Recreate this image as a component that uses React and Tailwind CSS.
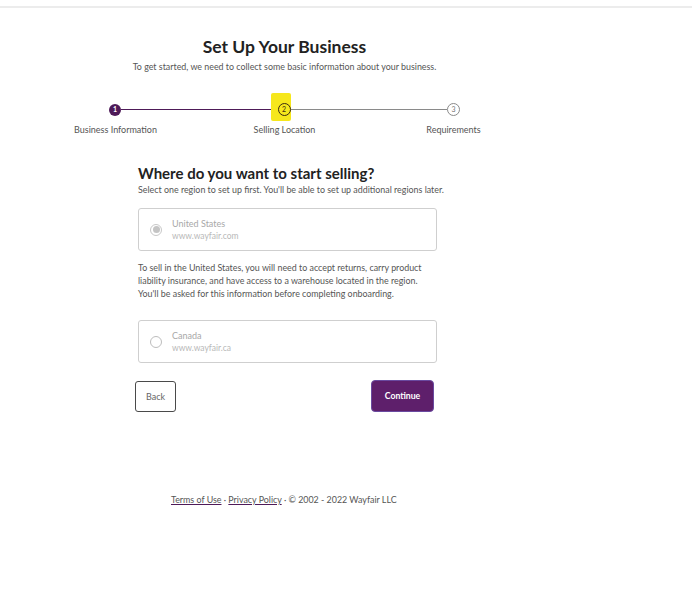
import React from 'react';

const steps = [
    { n: 1, label: 'Business Information', state: 'done' },
    { n: 2, label: 'Selling Location', state: 'current' },
    { n: 3, label: 'Requirements', state: 'todo' },
];

const StepDot = ({ step }) => {
    if (step.state === 'done') {
        return (
            <div className="w-[12px] h-[12px] rounded-full bg-[#4e1a58] text-white text-[7px] font-bold flex items-center justify-center">
                {step.n}
            </div>
        );
    }
    if (step.state === 'current') {
        return (
            <div className="relative w-[13px] h-[13px]">
                {/* highlighter mark */}
                <div className="absolute left-[-7px] top-[-10px] w-[20px] h-[28px] bg-[#f6e71c] rounded-[2px]"></div>
                <div className="relative w-[13px] h-[13px] rounded-full border-[1.5px] border-[#3a2a10] text-[#3a2a10] text-[7px] flex items-center justify-center">
                    {step.n}
                </div>
            </div>
        );
    }
    return (
        <div className="w-[13px] h-[13px] rounded-full border border-[#8a8a8a] bg-white text-[#777] text-[7px] flex items-center justify-center">
            {step.n}
        </div>
    );
};

const RegionCard = ({ name, url, selected }) => (
    <div className="h-[43px] border border-[#cfcfcf] rounded-[3px] flex items-center pl-[11px]">
        {selected ? (
            <div className="w-[12px] h-[12px] rounded-full border border-[#c8c8c8] flex items-center justify-center">
                <div className="w-[7px] h-[7px] rounded-full bg-[#c4c4c4]"></div>
            </div>
        ) : (
            <div className="w-[12px] h-[12px] rounded-full border border-[#bdbdbd]"></div>
        )}
        <div className="ml-[10px] flex flex-col leading-[13px]">
            <span className="text-[9px] text-[#a8a8a8]">{name}</span>
            <span className="text-[8.5px] text-[#b8b8b8]">{url}</span>
        </div>
    </div>
);

export default function App() {
    return (
        <div className="w-[695px] h-[593px] bg-white text-[#2b2b2b] overflow-hidden" style={{ fontFamily: 'Lato, "Open Sans", sans-serif' }}>
            <div className="pt-[6px]">
                <div className="w-[692px] h-[2px] bg-[#ececec]"></div>
            </div>

            <div className="ml-[31px] w-[507px]">
                {/* Header */}
                <h1 className="mt-[29px] text-center text-[17.5px] leading-[20px] font-bold text-[#222]">Set Up Your Business</h1>
                <p className="mt-[4px] text-center text-[8.9px] leading-[11px] text-[#555]">
                    To get started, we need to collect some basic information about your business.
                </p>

                {/* Stepper */}
                <div className="mt-[31px] mx-[78px] flex items-center">
                    <StepDot step={steps[0]} />
                    <div className="flex-1 h-[1.5px] bg-[#4e1a58]"></div>
                    <StepDot step={steps[1]} />
                    <div className="flex-1 h-[1px] bg-[#8a8a8a]"></div>
                    <StepDot step={steps[2]} />
                </div>
                <div className="mt-[8px] grid grid-cols-3 text-center text-[9px] leading-[11px] text-[#555]">
                    {steps.map((s) => (
                        <span key={s.n}>{s.label}</span>
                    ))}
                </div>

                {/* Region picker */}
                <div className="ml-[107px] w-[299px]">
                    <h2 className="mt-[29px] text-[15px] leading-[18px] font-bold text-[#222]">Where do you want to start selling?</h2>
                    <p className="mt-[2px] text-[8.9px] leading-[11px] text-[#555] whitespace-nowrap">
                        Select one region to set up first. You'll be able to set up additional regions later.
                    </p>

                    <div className="mt-[13px]">
                        <RegionCard name="United States" url="www.wayfair.com" selected />
                    </div>

                    <p className="mt-[10px] text-[8.9px] leading-[13px] text-[#555] whitespace-nowrap">
                        To sell in the United States, you will need to accept returns, carry product
                        <br />
                        liability insurance, and have access to a warehouse located in the region.
                        <br />
                        You'll be asked for this information before completing onboarding.
                    </p>

                    <div className="mt-[20px]">
                        <RegionCard name="Canada" url="www.wayfair.ca" />
                    </div>

                    <div className="mt-[17px] flex items-start justify-between -ml-[3px] mr-[3px]">
                        <button className="mt-[1px] w-[41px] h-[31px] border-[1.5px] border-[#4a4a4a] rounded-[3px] bg-white text-[9px] text-[#666]">
                            Back
                        </button>
                        <button className="w-[63px] h-[32px] rounded-[4px] bg-[#5e1f6b] border border-[#6a4aa0] text-white text-[8.7px] font-bold">
                            Continue
                        </button>
                    </div>
                </div>
            </div>

            {/* Footer */}
            <div className="mt-[82px] ml-[171px] text-[8.9px] leading-[11px] text-[#555]">
                <a className="underline decoration-[#4e1a58]">Terms of Use</a>
                <span> · </span>
                <a className="underline decoration-[#4e1a58]">Privacy Policy</a>
                <span> · © 2002 - 2022 Wayfair LLC</span>
            </div>
        </div>
    );
}
